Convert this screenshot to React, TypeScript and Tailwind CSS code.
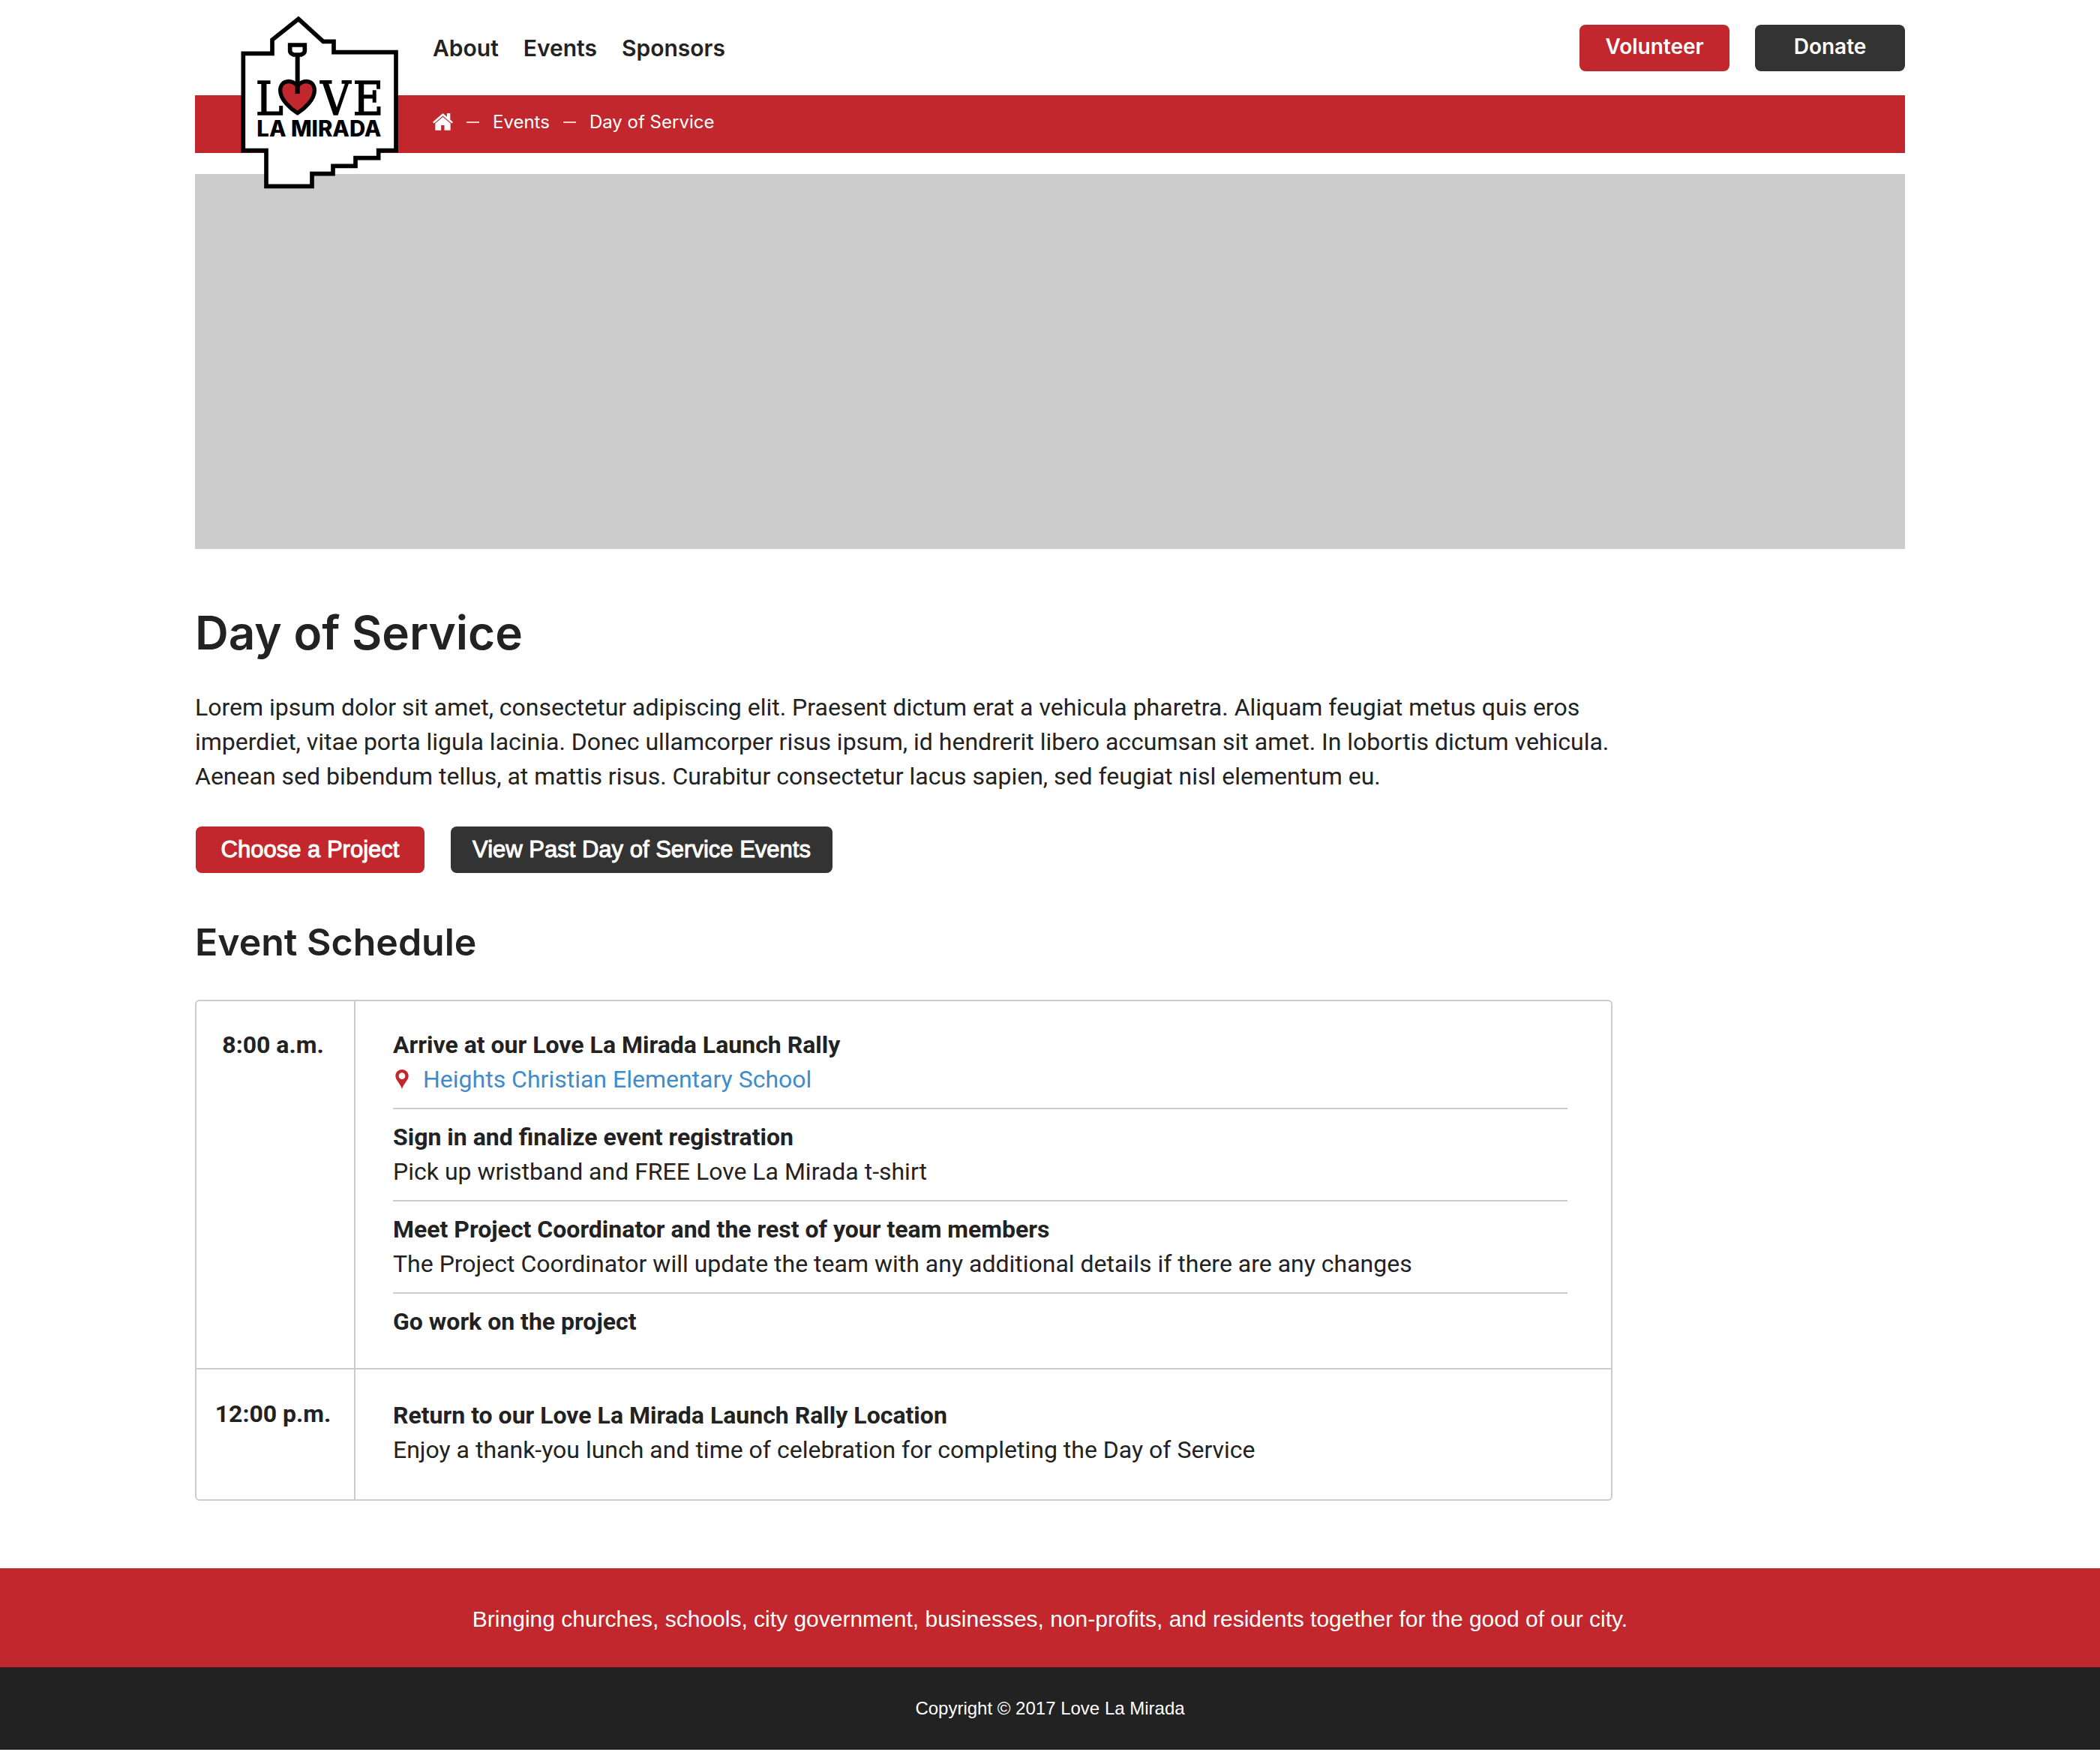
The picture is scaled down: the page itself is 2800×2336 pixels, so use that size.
import React from "react";

const RED = "#c1272d";

function Logo() {
  return (
    <svg viewBox="240 60 639 699" className="block w-[213px] h-[233px]" role="img" aria-label="Love La Mirada">
      <path
        d="M253 214H369V159L474 76L573 166H615V209H864V602H794V632H702V664H612V695H528V745H345V602H253Z"
        fill="#fff"
        stroke="#000"
        strokeWidth="17"
      />
      <path
        d="M470 345C455 318 401 315 401 362C401 397 440 433 470 452C500 433 538 397 538 362C538 315 485 318 470 345Z"
        fill={RED}
        stroke="#000"
        strokeWidth="16"
      />
      <path d="M440 180H499V204Q498 214 484 219H455Q441 214 440 204Z" fill="#fff" stroke="#000" strokeWidth="17" />
      <path d="M470 222V375" stroke="#000" strokeWidth="18" />
      <text
        y="460"
        textAnchor="middle"
        stroke="#000"
        strokeWidth="5"
        className="font-['DejaVu_Serif_Condensed','DejaVu_Serif',serif] text-[184px]"
      >
        <tspan x="358">L</tspan>
        <tspan x="622">V</tspan>
        <tspan x="753">E</tspan>
      </text>
      <text x="556" y="545" textAnchor="middle" className="font-[Inter,sans-serif] text-[88px] font-extrabold">
        LA MIRADA
      </text>
    </svg>
  );
}

function HomeIcon() {
  return (
    <svg viewBox="0 0 80 68" className="block w-[27px] h-[23px]" fill="currentColor" aria-hidden="true">
      <path d="M40 0L0 35L5 40L40 10L75 40L80 35L69 25V0H56V14Z" />
      <path d="M40 15L10 40V67H33V47H46V67H70V40Z" />
    </svg>
  );
}

function PinIcon() {
  return (
    <svg viewBox="0 0 54 78" className="block w-[18px] h-[26px]" fill={RED} aria-hidden="true">
      <path
        fillRule="evenodd"
        d="M27 0C12 0 1 11 1 26C1 42 20 55 27 78C34 55 53 42 53 26C53 11 42 0 27 0ZM27 13C34 13 40 19 40 26C40 33 34 39 27 39C20 39 14 33 14 26C14 19 20 13 27 13Z"
      />
    </svg>
  );
}

const NAV = ["About", "Events", "Sponsors"];

type Item = { title: string; text?: string; place?: string };

const SCHEDULE: { time: string; items: Item[] }[] = [
  {
    time: "8:00 a.m.",
    items: [
      { title: "Arrive at our Love La Mirada Launch Rally", place: "Heights Christian Elementary School" },
      { title: "Sign in and finalize event registration", text: "Pick up wristband and FREE Love La Mirada t-shirt" },
      {
        title: "Meet Project Coordinator and the rest of your team members",
        text: "The Project Coordinator will update the team with any additional details if there are any changes",
      },
      { title: "Go work on the project" },
    ],
  },
  {
    time: "12:00 p.m.",
    items: [
      {
        title: "Return to our Love La Mirada Launch Rally Location",
        text: "Enjoy a thank-you lunch and time of celebration for completing the Day of Service",
      },
    ],
  },
];

function Header() {
  return (
    <header className="relative mx-auto max-w-[2280px] font-[Inter,sans-serif]">
      <div className="flex h-[127px] items-center justify-between pl-[317px]">
        <nav className="flex gap-[33px] text-[30px] font-semibold leading-[40px]">
          {NAV.map((label) => (
            <a key={label} href="#">
              {label}
            </a>
          ))}
        </nav>
        <div className="flex gap-[34px] text-[28px] font-semibold leading-[34px] text-white">
          <button className="h-[62px] w-[200px] rounded-lg bg-[#c1272d] pb-[3px]">Volunteer</button>
          <button className="h-[62px] w-[200px] rounded-lg bg-[#333] pb-[3px]">Donate</button>
        </div>
      </div>
      <nav
        aria-label="Breadcrumb"
        className="flex h-[77px] items-center gap-[18px] bg-[#c1272d] pb-[6px] pl-[317px] text-[24px] text-white"
      >
        <a href="#" aria-label="Home">
          <HomeIcon />
        </a>
        <span className="h-[2px] w-[17px] bg-white/75" />
        <a href="#">Events</a>
        <span className="h-[2px] w-[17px] bg-white/75" />
        <span>Day of Service</span>
      </nav>
      <a href="#" className="absolute left-[60px] top-[20px] z-10">
        <Logo />
      </a>
    </header>
  );
}

function Schedule() {
  return (
    <table className="w-full border-separate border-spacing-0 rounded-md border-2 border-[#ccc] text-left">
      <tbody>
        {SCHEDULE.map((row, i) => (
          <tr key={row.time} className="align-top">
            <th
              scope="row"
              className={
                i === 0
                  ? "w-[212px] border-r-2 border-[#ccc] pt-[35px] pr-[6px] text-center font-bold"
                  : "w-[212px] border-r-2 border-t-2 border-[#ccc] pt-[36px] pr-[6px] text-center font-bold"
              }
            >
              {row.time}
            </th>
            <td
              className={
                i === 0
                  ? "pb-[39px] pl-[50px] pr-[58px] pt-[35px]"
                  : "border-t-2 border-[#ccc] pb-[43px] pl-[50px] pr-[58px] pt-[38px]"
              }
            >
              {row.items.map((item, j) => (
                <div
                  key={item.title}
                  className={j === 0 ? "" : "mt-[15px] border-t-2 border-[#ccc] pt-[14px]"}
                >
                  <h3 className="font-bold">{item.title}</h3>
                  {item.text && <p>{item.text}</p>}
                  {item.place && (
                    <p className="flex items-center gap-[19px] pl-[3px] text-[#428bca]">
                      <PinIcon />
                      <a href="#">{item.place}</a>
                    </p>
                  )}
                </div>
              ))}
            </td>
          </tr>
        ))}
      </tbody>
    </table>
  );
}

export default function App() {
  return (
    <div className="bg-white font-[Roboto,sans-serif] text-[#222]">
      <Header />
      <main className="mx-auto max-w-[2280px] pb-[90px] pt-[28px]">
        <div className="h-[500px] bg-[#ccc]" />
        <div className="max-w-[1890px] text-[32px] leading-[46px]">
          <h1 className="mt-[72px] font-[Inter,sans-serif] text-[62px] font-semibold leading-[80px]">Day of Service</h1>
          <p className="mt-[36px]">
            Lorem ipsum dolor sit amet, consectetur adipiscing elit. Praesent dictum erat a vehicula pharetra. Aliquam
            feugiat metus quis eros imperdiet, vitae porta ligula lacinia. Donec ullamcorper risus ipsum, id hendrerit
            libero accumsan sit amet. In lobortis dictum vehicula. Aenean sed bibendum tellus, at mattis risus.
            Curabitur consectetur lacus sapien, sed feugiat nisl elementum eu.
          </p>
          <div className="mt-[44px] flex gap-[35px] pl-px font-['Liberation_Sans',sans-serif] text-[31px] leading-[62px] text-white [-webkit-text-stroke:1px_white]">
            <button className="h-[62px] w-[305px] rounded-lg bg-[#c1272d]">Choose a Project</button>
            <button className="h-[62px] w-[509px] rounded-lg bg-[#333]">View Past Day of Service Events</button>
          </div>
          <h2 className="mb-[47px] mt-[62px] font-[Inter,sans-serif] text-[50px] font-semibold leading-[60px]">
            Event Schedule
          </h2>
          <Schedule />
        </div>
      </main>
      <footer className="text-center font-['Liberation_Sans',sans-serif] text-white">
        <p className="bg-[#c1272d] pb-[46px] pt-[50px] text-[30px] leading-[36px]">
          Bringing churches, schools, city government, businesses, non-profits, and residents together for the good of
          our city.
        </p>
        <p className="bg-[#222] py-[39px] text-[24px] leading-[32px]">Copyright © 2017 Love La Mirada</p>
      </footer>
    </div>
  );
}
